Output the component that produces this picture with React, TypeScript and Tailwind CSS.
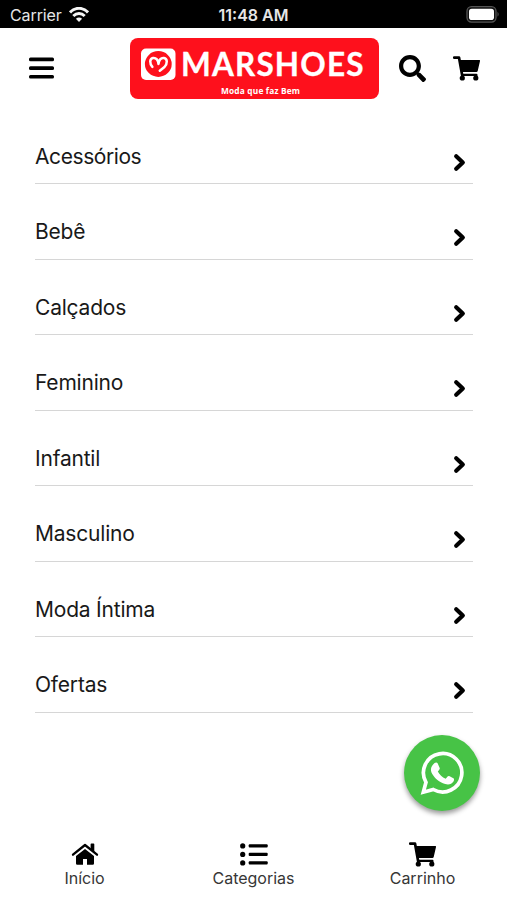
import React from "react";
import { FaSearch } from "react-icons/fa";

const categories = ["Acessórios", "Bebê", "Calçados", "Feminino", "Infantil", "Masculino", "Moda Íntima", "Ofertas"];

function StatusBar() {
  return (
    <div className="grid h-[27.5px] grid-cols-3 items-center bg-black px-2.5 pt-[3px] text-[16px] leading-none text-[#e6e6e6]">
      <div className="flex items-center gap-[7px]">
        <span className="tracking-[-0.1px]">Carrier</span>
        <svg className="-mt-[2px]" width="20" height="15" viewBox="0 0 20 15" fill="none" stroke="#f5f5f5" strokeWidth="2.9">
          <path d="M1 5.4C6-.1 14-.1 19 5.4" />
          <path d="M4.3 9C7.6 5.6 12.4 5.6 15.7 9" />
          <path d="M10 15 6.9 11.8Q10 9.4 13.1 11.8Z" fill="#f5f5f5" stroke="none" />
        </svg>
      </div>
      <span className="text-center text-[16px] font-semibold whitespace-nowrap">11:48 AM</span>
      <svg className="-mt-[2px] -mr-[3px] justify-self-end" width="34" height="17" viewBox="0 0 34 17">
        <rect x="1" y="0.7" width="29" height="15.4" rx="4.5" fill="#111" stroke="#555" strokeWidth="1.3" />
        <rect x="3" y="2.7" width="25" height="11.4" rx="2.8" fill="#fff" />
        <path d="M31.5 5.8q2.4 2.5 0 5z" fill="#555" />
      </svg>
    </div>
  );
}

function Logo() {
  return (
    <svg className="ml-[76px]" width="249" height="61" viewBox="0 0 249 61" role="img">
      <rect width="249" height="61" rx="8" fill="#fe101c" />
      <rect x="11" y="10.5" width="34.5" height="31.5" rx="5" fill="#fff" />
      <ellipse cx="28.3" cy="26" rx="13.4" ry="12.9" fill="#fe101c" />
      <path
        d="M22.400 28.800C19.300 25.400 19.600 20.600 23 20C26.200 19.500 28.300 22.300 28.500 26C28.800 22.300 30.800 19.500 34 20C37.600 20.600 37.600 25.600 34.500 29L29.800 32.800"
        fill="none"
        stroke="#fff"
        strokeWidth="2.5"
        strokeLinecap="round"
        strokeLinejoin="round"
      />
      <text
        x="51"
        y="37.6"
        textLength="182.500"
        lengthAdjust="spacing"
        fill="#fff"
        className="font-[Lato,sans-serif] text-[31.5px] font-bold"
        stroke="#fff"
        strokeWidth="0.3"
      >
        MARSHOES
      </text>
      <text x="91" y="55.5" textLength="79" fill="#fff" className="font-['Open_Sans',sans-serif] text-[8.3px] font-bold">
        Moda que faz Bem
      </text>
    </svg>
  );
}

function Cart({ className = "" }: { className?: string }) {
  return (
    <svg className={className} width="27" height="25" viewBox="0 0 27 25" fill="none" stroke="#000">
      <path d="M1.200 1.600H6L9.300 20" strokeWidth="2.700" strokeLinecap="round" strokeLinejoin="round" />
      <path d="M6.500 4H26.200a.8.8 0 0 1 .8 1L24.700 15a1.400 1.400 0 0 1-1.300 1H8.500z" fill="#000" stroke="none" />
      <path d="M9 18.800H23.400V21" strokeWidth="2.200" strokeLinejoin="round" />
      <circle cx="9.300" cy="22" r="2.600" fill="#000" stroke="none" />
      <circle cx="22.800" cy="22" r="2.600" fill="#000" stroke="none" />
    </svg>
  );
}

function Home() {
  return (
    <svg width="28" height="24" viewBox="0 0 28 24" fill="#000">
      <path d="M5 14 14 7l9 7v7.500a1.300 1.300 0 0 1-1.300 1.300h-5.700V17h-4v5.800H6.300A1.300 1.300 0 0 1 5 21.500z" />
      <path d="M2 12.700 14 3l12 9.700" fill="none" stroke="#000" strokeWidth="2.300" strokeLinecap="round" strokeLinejoin="round" />
      <path d="M19.600 2.200a.8.8 0 0 1 .8-.8h2.100a.8.8 0 0 1 .8.8v8.300l-3.700-3z" />
    </svg>
  );
}

function List() {
  return (
    <svg width="28" height="24" viewBox="0 0 28 24" fill="#000">
      {[3.9, 12.4, 20.900].map((y) => (
        <g key={y}>
          <circle cx="2.700" cy={y} r="2.600" />
          <rect x="8.700" y={y - 1.700} width="19" height="3.400" rx="1" />
        </g>
      ))}
    </svg>
  );
}

function WhatsApp() {
  return (
    <svg width="44" height="44" viewBox="0 0 44 44" fill="none">
      <path
        d="M3.300 41.200 6 31.300A19.200 19.200 0 1 1 13.300 38.500Z"
        stroke="#fff"
        strokeWidth="3.700"
        strokeLinejoin="miter"
      />
      <path
        d="M14.600 12.100c.6-.7 2.500-.9 3 .1l2.100 4.700c.3.900-.1 1.500-1.900 3.600 1.800 3.400 4.300 5.600 7.900 7.200 2.200-2.700 2.600-3 3.400-2.600l4.300 2.100c1 .6.800 2-.1 3.600-1.500 2.400-5 3.200-8.100 2.100-6.200-2-10-5.100-13.100-10.200-2.100-3.600-1.200-7.600 2.500-10.600Z"
        fill="#fff"
      />
    </svg>
  );
}

export default function App() {
  return (
    <main className="relative flex h-[900px] w-[507px] flex-col overflow-hidden bg-white font-[Inter,sans-serif] text-[#191919]">
      <StatusBar />
      <header className="flex h-[81px] items-center pl-[29px]">
        <svg width="25" height="22" viewBox="0 0 25 22" fill="#000">
          <rect y="0.5" width="25" height="3.7" rx="1.5" />
          <rect y="9.200" width="25" height="3.7" rx="1.5" />
          <rect y="17.900" width="25" height="3.7" rx="1.5" />
        </svg>
        <Logo />
        <FaSearch className="ml-5 text-black" size={27} />
        <Cart className="ml-[27px]" />
      </header>

      <ul className="flex flex-col pr-[34px] pl-[34.500px]">
        {categories.map((name) => (
          <li key={name} className="flex h-[75.500px] justify-between border-b-[1.500px] border-[#d6d6d6] pr-[7px] pl-[0.500px]">
            <span className={`pt-[32px] text-[21px] leading-[32px] ${name === "Acessórios" ? "tracking-[-0.420px]" : "tracking-[-0.200px]"}`}>{name}</span>
            <svg className="mt-[44px]" width="13" height="20" viewBox="0 0 13 20" fill="none" stroke="#000" strokeWidth="4.200" strokeLinecap="round" strokeLinejoin="round">
              <path d="M3.200 3.200 9.800 9.500 3.200 15.800" />
            </svg>
          </li>
        ))}
      </ul>

      <button aria-label="WhatsApp" className="absolute top-[735px] left-[404px] flex size-[76px] items-center justify-center rounded-full bg-[#47c346] shadow-[0_3px_5px_rgba(0,0,0,0.4)]">
        <WhatsApp />
      </button>

      <nav className="mt-auto grid h-[58px] grid-cols-3 text-[16px] text-[#363636]">
        <div className="flex flex-col items-center">
          <Home />
          <span className="leading-[24px]">Início</span>
        </div>
        <div className="flex flex-col items-center">
          <List />
          <span className="leading-[24px]">Categorias</span>
        </div>
        <div className="flex flex-col items-center">
          <Cart className="-mb-px" />
          <span className="leading-[24px]">Carrinho</span>
        </div>
      </nav>
    </main>
  );
}
